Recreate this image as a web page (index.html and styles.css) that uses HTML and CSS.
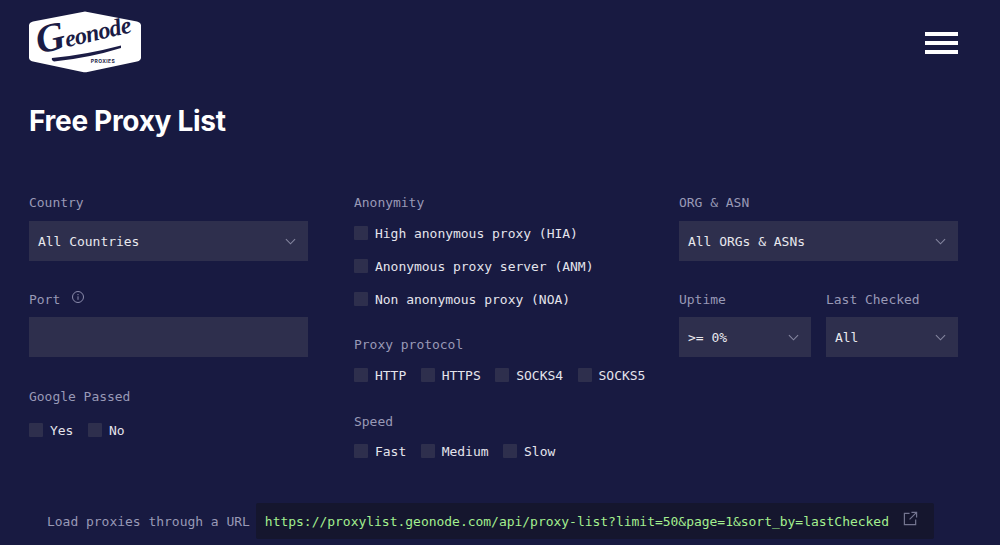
FILE: index.html
```html
<!DOCTYPE html>
<html lang="en">
<head>
<meta charset="utf-8">
<title>Free Proxy List</title>
<link rel="stylesheet" href="styles.css">
</head>
<body>
<div class="page">
  <header class="header">
    <svg class="logo" viewBox="0 0 112 62" width="112" height="62" aria-label="Geonode Proxies">
      <path class="logo-shape" d="M56 0.500 Q57 0.500 58.500 1 L108 10.500 Q112 11.500 112 14.500 L112 46.500 Q112 49.500 108 50.500 L58.500 61 Q56 61.500 53.500 61 L4 50.500 Q0 49.500 0 46.500 L0 14.500 Q0 11.500 4 10.500 L53.500 1 Q55 0.500 56 0.500 Z"/>
      <g transform="rotate(-13 13 42)">
        <text class="logo-word" x="10" y="42"><tspan class="logo-cap">G</tspan>eonode</text>
      </g>
      <path class="logo-swoosh" d="M23 47 Q56 44 92 34.500 L92 37 Q60 47 25 50.500 Q22 49 23 47 Z"/>
      <text class="logo-sub" x="74" y="52" text-anchor="middle">PROXIES</text>
    </svg>
    <div class="burger"><span></span><span></span><span></span></div>
  </header>

  <h1 class="title">Free Proxy List</h1>

  <main class="filters">
    <section class="col">
      <div class="label">Country</div>
      <div class="select">All Countries<svg class="chev" viewBox="0 0 12 7"><path d="M1 1l5 5 5-5"/></svg></div>
      <div class="label label-next">Port<svg class="info" viewBox="0 0 14 14"><circle cx="7" cy="7" r="5.500"/><path d="M7 6.300v3.500M7 4v1.200"/></svg></div>
      <div class="select"></div>
      <div class="label label-next label-google">Google Passed</div>
      <div class="checks checks-google">
        <span class="check"><i class="box"></i>Yes</span>
        <span class="check"><i class="box"></i>No</span>
      </div>
    </section>

    <section class="col">
      <div class="label">Anonymity</div>
      <div class="stack">
        <span class="check"><i class="box"></i>High anonymous proxy (HIA)</span>
        <span class="check"><i class="box"></i>Anonymous proxy server (ANM)</span>
        <span class="check"><i class="box"></i>Non anonymous proxy (NOA)</span>
      </div>
      <div class="label label-mid">Proxy protocol</div>
      <div class="checks">
        <span class="check"><i class="box"></i>HTTP</span>
        <span class="check"><i class="box"></i>HTTPS</span>
        <span class="check"><i class="box"></i>SOCKS4</span>
        <span class="check"><i class="box"></i>SOCKS5</span>
      </div>
      <div class="label label-speed">Speed</div>
      <div class="checks">
        <span class="check"><i class="box"></i>Fast</span>
        <span class="check"><i class="box"></i>Medium</span>
        <span class="check"><i class="box"></i>Slow</span>
      </div>
    </section>

    <section class="col">
      <div class="label">ORG &amp; ASN</div>
      <div class="select">All ORGs &amp; ASNs<svg class="chev" viewBox="0 0 12 7"><path d="M1 1l5 5 5-5"/></svg></div>
      <div class="pair">
        <div class="pair-item">
          <div class="label label-next">Uptime</div>
          <div class="select">&gt;= 0%<svg class="chev" viewBox="0 0 12 7"><path d="M1 1l5 5 5-5"/></svg></div>
        </div>
        <div class="pair-item">
          <div class="label label-next">Last Checked</div>
          <div class="select">All<svg class="chev" viewBox="0 0 12 7"><path d="M1 1l5 5 5-5"/></svg></div>
        </div>
      </div>
    </section>
  </main>

  <footer class="url-row">
    <span class="url-label">Load proxies through a URL</span>
    <div class="url-box">
      <span class="url">https://proxylist.geonode.com/api/proxy-list?limit=50&amp;page=1&amp;sort_by=lastChecked</span>
      <svg class="ext" viewBox="0 0 16 16"><path d="M7 2.500H1.500v12h12V9M9 1.500h5.500V7M14.500 1.500L7 9"/></svg>
    </div>
  </footer>
</div>
</body>
</html>
```

FILE: styles.css
```css
* { box-sizing: border-box; }

html, body {
  margin: 0;
  height: 100%;
  overflow: hidden;
  background: #181a41;
}

.page {
  padding: 11px 42px 0 29px;
  font-family: "DejaVu Sans Mono", "Liberation Mono", monospace;
  font-size: 13px;
  letter-spacing: -0.025px;
  color: #e4e4ec;
}

.header {
  display: flex;
  justify-content: space-between;
  align-items: flex-start;
  height: 62px;
}

.logo { display: block; }
.logo-shape { fill: #fff; }
.logo-swoosh { fill: #1b1c45; }
.logo-word {
  font-family: "Liberation Serif", serif;
  font-style: italic;
  font-weight: 700;
  font-size: 24px;
  letter-spacing: -0.6px;
  fill: #1b1c45;
}
.logo-cap { font-size: 40px; }
.logo-sub {
  font-family: "Inter", sans-serif;
  font-weight: 700;
  font-size: 5px;
  letter-spacing: 0.4px;
  fill: #1b1c45;
}

.burger {
  width: 33px;
  margin-top: 21px;
  display: flex;
  flex-direction: column;
  gap: 5px;
}
.burger span {
  display: block;
  height: 4px;
  background: #fff;
}

.title {
  margin: 30px 0 0;
  font-family: "Inter", sans-serif;
  font-weight: 700;
  font-size: 28px;
  line-height: 36px;
  letter-spacing: -0.3px;
  color: #fff;
}

.filters {
  margin-top: 53px;
  display: grid;
  grid-template-columns: repeat(3, 279px);
  column-gap: 46px;
}

.col { display: flex; flex-direction: column; }

.label {
  display: flex;
  align-items: center;
  height: 20px;
  margin-bottom: 9px;
  color: #9899b6;
}
.label-next { margin-top: 28px; margin-bottom: 8px; }
.label-google { margin-top: 29px; }
.label-mid { margin-top: 25px; margin-bottom: 11px; }
.label-speed { margin-top: 26px; margin-bottom: 10px; }

.info {
  width: 14px;
  height: 14px;
  margin: -5px 0 0 11px;
  fill: none;
  stroke: #8a8bab;
  stroke-width: 1;
}

.select {
  position: relative;
  display: flex;
  align-items: center;
  height: 40px;
  padding: 0 9px;
  background: #2e2f4d;
  color: #e8e8ee;
}
.chev {
  position: absolute;
  right: 12px;
  top: 17px;
  width: 11px;
  height: 7px;
  fill: none;
  stroke: #85869f;
  stroke-width: 1.200;
}

.stack {
  display: flex;
  flex-direction: column;
  gap: 13px;
  margin-top: 2px;
}

.checks { display: flex; gap: 14.500px; }
.checks-google { margin-top: 6px; }

.check {
  display: flex;
  align-items: center;
  gap: 7px;
  height: 20px;
  white-space: nowrap;
}
.box {
  flex: none;
  width: 14px;
  height: 14px;
  background: #2e2f4d;
  border-radius: 1px;
}

.pair { display: flex; gap: 15px; }
.pair-item { flex: 1; min-width: 0; }

.url-row {
  position: absolute;
  left: 47px;
  top: 503px;
  display: flex;
  align-items: center;
  gap: 6px;
}
.url-label { color: #9899b6; }
.url-box {
  display: flex;
  align-items: center;
  width: 678px;
  height: 36px;
  padding: 0 0 0 9px;
  background: #15162e;
  border-radius: 2px;
}
.url { color: #a3ef8f; }
.ext {
  width: 15px;
  height: 15px;
  margin: -6px 0 0 14px;
  fill: none;
  stroke: #73748f;
  stroke-width: 1.300;
}
```
